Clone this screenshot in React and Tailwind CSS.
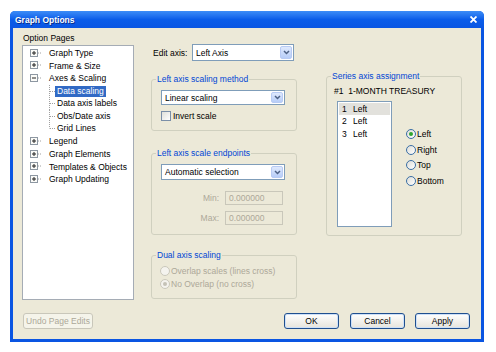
import React from 'react';

const topItems = ['Graph Type', 'Frame & Size', 'Axes & Scaling'];
const childItems = ['Data scaling', 'Data axis labels', 'Obs/Date axis', 'Grid Lines'];
const moreItems = ['Legend', 'Graph Elements', 'Templates & Objects', 'Graph Updating'];

const Expander = ({ open }) => (
  <svg width="12" height="9" viewBox="0 0 12 9" className="shrink-0">
    <rect x="0.5" y="0.5" width="7" height="7" fill="#fbfbf8" stroke="#8d97a2" />
    <line x1="2" y1="4" x2="6" y2="4" stroke="#222" strokeWidth="1" />
    {!open && <line x1="4" y1="2" x2="4" y2="6" stroke="#222" strokeWidth="1" />}
    <line x1="8" y1="4" x2="12" y2="4" stroke="#a0a0a0" strokeDasharray="1 1" />
  </svg>
);

const TopRow = ({ label, open }) => (
  <div className="h-[12.6px] flex items-center pl-[7px]">
    <Expander open={open} />
    <span className="ml-[7px] leading-[10px] whitespace-nowrap">{label}</span>
  </div>
);

const ChildRow = ({ label, last, active }) => (
  <div className="h-[12.6px] flex items-center pl-[26px]">
    <svg width="6" height="13" viewBox="0 0 6 13" className="shrink-0">
      <line x1="0.5" y1="0" x2="0.5" y2={last ? 6.5 : 13} stroke="#a0a0a0" strokeDasharray="1 1" />
      <line x1="1" y1="6.5" x2="6" y2="6.5" stroke="#a0a0a0" strokeDasharray="1 1" />
    </svg>
    <span
      className={`leading-[11px] px-[2px] whitespace-nowrap ${active ? 'bg-[#316AC5] text-white' : ''}`}
    >
      {label}
    </span>
  </div>
);

const Combo = ({ value, className }) => (
  <div className={`flex items-stretch bg-white border border-[#7F9DB9] p-[1px] ${className}`}>
    <span className="flex-1 flex items-center pl-[2px] leading-[10px]">{value}</span>
    <span className="w-[12px] flex items-center justify-center rounded-[2px] border border-[#B8CBF4] bg-gradient-to-b from-[#dfe9fd] to-[#b7cdf8]">
      <svg width="7" height="5" viewBox="0 0 7 5">
        <path d="M1 1 L3.5 3.5 L6 1" fill="none" stroke="#4d6185" strokeWidth="1.5" />
      </svg>
    </span>
  </div>
);

const Radio = ({ label, checked, disabled }) => (
  <div className="flex items-center">
    <span
      className={`w-[10px] h-[10px] rounded-full border flex items-center justify-center ${
        disabled ? 'border-[#cac8bb] bg-[#f4f3ee]' : 'border-[#3a6ea5] bg-gradient-to-br from-[#dcdcd6] to-white'
      }`}
    >
      {checked && (
        <span className={`w-[4px] h-[4px] rounded-full ${disabled ? 'bg-[#c4c2b6]' : 'bg-[#2fa52f]'}`} />
      )}
    </span>
    <span className={`ml-[1px] leading-[10px] whitespace-nowrap ${disabled ? 'text-[#aca899]' : ''}`}>{label}</span>
  </div>
);

// groupbox: padding goes on the inner div so the legend keeps its own offset
const Group = ({ title, className, inner, children }) => (
  <fieldset className={`border border-[#d0d0bf] rounded-[3px] ${className}`}>
    <legend className="ml-[4px] px-[1px] leading-[10px] text-[#0046D5] whitespace-nowrap">{title}</legend>
    <div className={inner}>{children}</div>
  </fieldset>
);

const XpButton = ({ label, disabled, className }) => (
  <div
    className={`h-[16px] flex items-center justify-center rounded-[3px] border leading-[10px] ${
      disabled
        ? 'border-[#c9c7ba] bg-[#f5f4ea] text-[#aca899]'
        : 'border-[#1f4f8f] bg-gradient-to-b from-white to-[#e6e4dc] shadow-[inset_0_0_0_1px_#cde0f8]'
    } ${className}`}
  >
    {label}
  </div>
);

export default function App() {
  return (
    <div className="w-[496px] h-[352px] bg-white pt-[11px] pl-[10px] text-[8.5px] text-black font-['Liberation_Sans',Arial,sans-serif]">
      <div className="w-[474px] h-[331px] flex flex-col rounded-t-[5px] bg-[#0A55E2] overflow-hidden">
        {/* title bar */}
        <div className="h-[17px] shrink-0 flex items-center justify-between pl-[5px] pr-[7px] bg-gradient-to-b from-[#3d8df7] via-[#0b5de9] to-[#0a56e3]">
          <span className="font-bold text-white leading-[10px] [text-shadow:1px_1px_0_#0a2f8a]">Graph Options</span>
          <svg width="7" height="7" viewBox="0 0 7 7">
            <path d="M0.5 0.5 L6.5 6.5 M6.5 0.5 L0.5 6.5" stroke="white" strokeWidth="1.8" />
          </svg>
        </div>

        {/* body */}
        <div className="flex-1 mx-[3px] mb-[3px] bg-[#ECE9D8] flex flex-col">
          <div className="h-[272px] flex">
            {/* left: option pages */}
            <div className="ml-[9px] w-[112px] flex flex-col">
              <div className="h-[17px] pt-[5px] pl-[1px] leading-[11px]">Option Pages</div>
              <div className="flex-1 bg-white border border-[#a5acb5] pt-[1px]">
                {topItems.map((t, i) => (
                  <TopRow key={t} label={t} open={i === 2} />
                ))}
                {childItems.map((c, i) => (
                  <ChildRow key={c} label={c} active={i === 0} last={i === childItems.length - 1} />
                ))}
                {moreItems.map((t) => (
                  <TopRow key={t} label={t} />
                ))}
              </div>
            </div>

            {/* middle column */}
            <div className="ml-[17px] w-[146px] flex flex-col">
              <div className="mt-[16px] h-[17px] flex items-center">
                <span className="pl-[2px] w-[41px] leading-[10px]">Edit axis:</span>
                <Combo value="Left Axis" className="w-[102px] h-[17px]" />
              </div>

              <Group title="Left axis scaling method" className="mt-[13px] h-[57px]" inner="pl-[9px] pr-[11px]">
                <Combo value="Linear scaling" className="mt-[6px] h-[15px]" />
                <div className="mt-[6px] flex items-center">
                  <span className="w-[10px] h-[10px] border border-[#7b8fa8] bg-gradient-to-br from-[#e0e0da] to-white" />
                  <span className="ml-[2px] leading-[10px]">Invert scale</span>
                </div>
              </Group>

              <Group title="Left axis scale endpoints" className="mt-[17px] h-[87px]" inner="pl-[9px] pr-[11px]">
                <Combo value="Automatic selection" className="mt-[6px] h-[16px]" />
                <div className="mt-[11px] flex items-center justify-end pr-[2px]">
                  <span className="text-[#aca899] leading-[10px] mr-[6px]">Min:</span>
                  <span className="w-[58px] h-[14px] border border-[#c9c7ba] bg-[#ECE9D8] text-[#aca899] leading-[10px] pl-[3px] flex items-center">0.000000</span>
                </div>
                <div className="mt-[6px] flex items-center justify-end pr-[2px]">
                  <span className="text-[#aca899] leading-[10px] mr-[6px]">Max:</span>
                  <span className="w-[58px] h-[14px] border border-[#c9c7ba] bg-[#ECE9D8] text-[#aca899] leading-[10px] pl-[3px] flex items-center">0.000000</span>
                </div>
              </Group>

              <Group title="Dual axis scaling" className="mt-[15px] h-[49px]" inner="pl-[8px]">
                <div className="mt-[6px] flex flex-col gap-[3px]">
                  <Radio label="Overlap scales  (lines cross)" disabled />
                  <Radio label="No Overlap (no cross)" checked disabled />
                </div>
              </Group>
            </div>

            {/* right column */}
            <div className="ml-[29px] w-[136px]">
              <Group title="Series axis assignment" className="mt-[43px] h-[165px]" inner="pl-[7px]">
                <div className="mt-[5px] leading-[10px] whitespace-nowrap">#1&nbsp;&nbsp;1-MONTH TREASURY</div>
                <div className="mt-[5px] flex">
                  <div className="ml-[3px] w-[55px] h-[126px] bg-white border border-[#7F9DB9] p-[1px]">
                    {['1', '2', '3'].map((n, i) => (
                      <div
                        key={n}
                        className={`h-[12.3px] flex items-center pl-[3px] leading-[10px] ${i === 0 ? 'bg-[#e2e1dc]' : ''}`}
                      >
                        <span className="w-[11px]">{n}</span>
                        <span>Left</span>
                      </div>
                    ))}
                  </div>
                  <div className="ml-[14px] mt-[28px] flex flex-col gap-[5.5px]">
                    <Radio label="Left" checked />
                    <Radio label="Right" />
                    <Radio label="Top" />
                    <Radio label="Bottom" />
                  </div>
                </div>
              </Group>
            </div>
          </div>

          {/* buttons */}
          <div className="mt-[13px] flex items-center">
            <XpButton label="Undo Page Edits" disabled className="ml-[10px] w-[70px]" />
            <XpButton label="OK" className="ml-[191px] w-[55px]" />
            <XpButton label="Cancel" className="ml-[11px] w-[55px]" />
            <XpButton label="Apply" className="ml-[10px] w-[55px]" />
          </div>
        </div>
      </div>
    </div>
  );
}
